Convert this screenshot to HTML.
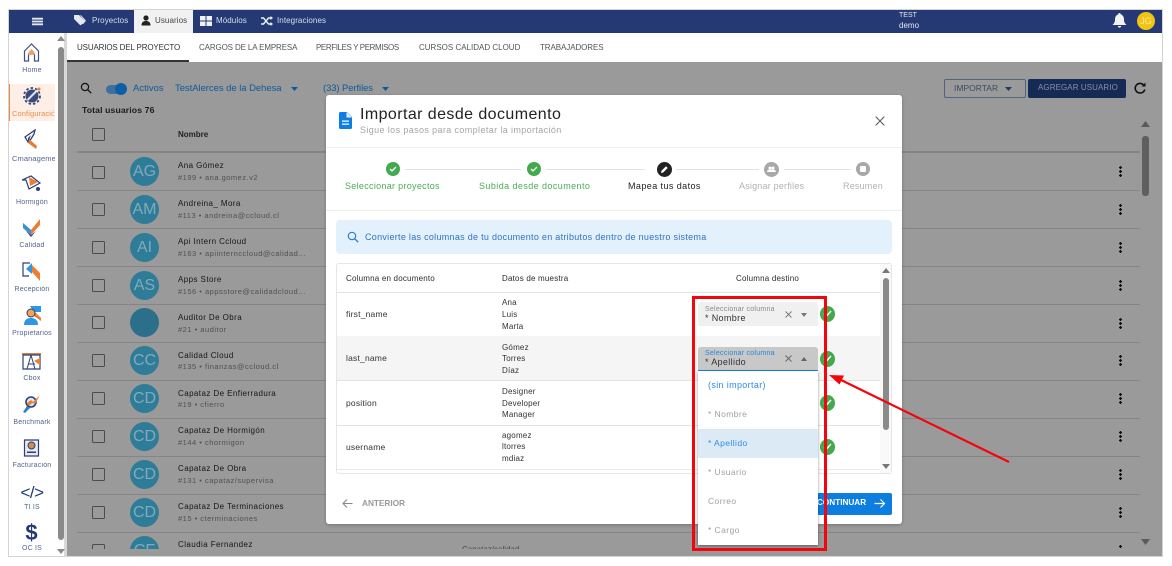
<!DOCTYPE html>
<html lang="es"><head><meta charset="utf-8"><title>Importar desde documento</title>
<style>
html,body{margin:0;padding:0;background:#fff}
body{width:1172px;height:566px;overflow:hidden;position:relative;font-family:"Liberation Sans",sans-serif;color:#222;filter:blur(.3px)}
div,span,svg{position:absolute;box-sizing:border-box}
.t{white-space:nowrap;line-height:1}
.nav{color:#d8deeb;font-size:8px;letter-spacing:.08px;top:17px}
.tab{font-size:8px;top:44px;color:#333}
.side{font-size:7px;color:#54658f;width:58px;left:3px;text-align:center;letter-spacing:.2px;overflow:hidden;height:9px}
.cb{left:92px;width:13px;height:13px;border:1.5px solid #4c4c4c;border-radius:1.5px}
.av{left:130px;width:29px;height:29px;border-radius:50%;background:#2f7c98;color:#82aaba;font-size:16px;text-align:center;line-height:29px}
.n{left:178px;font-size:8px;color:#161616;letter-spacing:.42px}
.s{left:178px;font-size:7.5px;color:#505050;letter-spacing:.5px}
.l{left:77px;width:1063px;height:1px;background:#858585}
.d{left:1119px;width:3px;height:11px;background:radial-gradient(circle at 1.5px 1.5px,#111 1.3px,transparent 1.4px) 0 0/3px 4px repeat-y}
.st{font-size:9px;top:182px;letter-spacing:.3px}
.c{font-size:8px;color:#333;left:502px;letter-spacing:.2px}
.f{font-size:8.5px;color:#333;left:346px;letter-spacing:.2px}
.o{left:708px;font-size:8.5px;color:#a0a0a0;letter-spacing:.42px}
.hd{font-size:8px;color:#2b2b2b;letter-spacing:.2px;top:275px}
</style></head><body>
<!-- frame -->
<div style="left:8px;top:9px;width:1155px;height:548px;border:1px solid #d4d4d4;background:#fff"></div>
<div style="left:9px;top:10px;width:1153px;height:23px;background:#253a75"></div>
<div style="left:67px;top:62px;width:1095px;height:494px;background:#9a9a9a"></div>
<div style="left:64px;top:33px;width:3px;height:523px;background:#d9d9d9"></div>
<!-- top nav -->
<svg style="left:32px;top:17px" width="11" height="9" viewBox="0 0 11 9"><path d="M0 .8h11v1.800H0zM0 3.600h11v1.800H0zM0 6.400h11v1.800H0z" fill="#e4e7f0"/></svg>
<svg style="left:73px;top:14px" width="14" height="13" viewBox="0 0 14 13"><path d="M1 1h5l6 6-4.500 4.500L1 5z" fill="#e3e7f0"/><path d="M8 1.200l5 5.400-3 3.800-.7-.6 2.300-3.200L7 1.200z" fill="#e3e7f0"/></svg>
<div class="t nav" style="left:92px">Proyectos</div>
<div style="left:134px;top:10px;width:59px;height:23px;background:#f1f1f1"></div>
<svg style="left:141px;top:15px" width="10" height="11" viewBox="0 0 10 11"><circle cx="5" cy="3" r="2.600" fill="#222"/><path d="M.5 10.500C.5 7 2.500 6 5 6s4.500 1 4.500 4.500z" fill="#222"/></svg>
<div class="t nav" style="left:155px;color:#444">Usuarios</div>
<svg style="left:200px;top:15px" width="12" height="12" viewBox="0 0 12 12"><path d="M0 1h5.500v4.500H0zM6.500 1H12v4.500H6.500zM0 6.500h5.500V11H0zM6.500 6.500H12V11H6.500z" fill="#f0f2f7"/></svg>
<div class="t nav" style="left:216px">Módulos</div>
<svg style="left:261px;top:16px" width="12" height="10" viewBox="0 0 12 10"><path d="M0 2h2.500l5 6H10M0 8h2.500l5-6H10" fill="none" stroke="#eef0f6" stroke-width="1.400"/><path d="M9.500 0l2.500 2-2.500 2zM9.500 6L12 8l-2.500 2z" fill="#eef0f6"/></svg>
<div class="t nav" style="left:277px">Integraciones</div>
<div class="t" style="left:899px;top:12px;font-size:7px;color:#e5e8f0">TEST</div>
<div class="t" style="left:899px;top:22px;font-size:8px;color:#e5e8f0">demo</div>
<svg style="left:1112px;top:12px" width="15" height="16" viewBox="0 0 15 16"><path d="M7.500 1c.8 0 1.200.5 1.200 1.200C11 3 12 5 12 7.500c0 2.500.8 3.800 2.500 5.500H.5C2.200 11.300 3 10 3 7.500 3 5 4 3 6.300 2.200 6.300 1.500 6.700 1 7.500 1zM5.800 14h3.400c0 1-.8 1.600-1.700 1.600S5.800 15 5.800 14z" fill="#f3f3f3"/></svg>
<div style="left:1137px;top:12px;width:18px;height:18px;border-radius:50%;background:#f3c312;color:#f6e9a8;font-size:9px;line-height:18px;text-align:center">JG</div>
<!-- tabs -->
<div class="t tab" style="left:77px;letter-spacing:-.15px">USUARIOS DEL PROYECTO</div>
<div style="left:67px;top:60px;width:122px;height:2px;background:#333"></div>
<div class="t tab" style="left:199px;color:#555;letter-spacing:-.13px">CARGOS DE LA EMPRESA</div>
<div class="t tab" style="left:316px;color:#555;letter-spacing:-.4px">PERFILES Y PERMISOS</div>
<div class="t tab" style="left:419px;color:#555">CURSOS CALIDAD CLOUD</div>
<div class="t tab" style="left:540px;color:#555;letter-spacing:-.08px">TRABAJADORES</div>
<!-- sidebar -->
<svg style="left:57px;top:36px" width="8" height="6" viewBox="0 0 8 6"><path d="M4 0l4 5H0z" fill="#8a8a8a"/></svg>
<div style="left:58px;top:47px;width:6px;background:#8a8a8a;border-radius:3px;height:493px"></div>
<svg style="left:57px;top:549px" width="8" height="6" viewBox="0 0 8 6"><path d="M0 0h8L4 5z" fill="#8a8a8a"/></svg>
<svg style="left:23px;top:43px" width="17" height="19" viewBox="0 0 17 19"><path d="M8.500 1L1.500 8v10h4v-6a3 3 0 016 0v6h4V8z" fill="none" stroke="#3d4f83" stroke-width="1.200"/><path d="M8.500 6l-3 3v3h6V9z" fill="#f0a268"/></svg>
<div class="t side" style="top:67px">Home</div>
<div style="left:9px;top:84px;width:46px;height:37px;background:#fdefe6;border-left:1px solid #ef8a46"></div>
<svg style="left:22px;top:86px" width="20" height="19" viewBox="0 0 20 19"><circle cx="10" cy="10" r="6.500" fill="#39497b"/><circle cx="10" cy="10" r="8" fill="none" stroke="#39497b" stroke-width="1.800" stroke-dasharray="2.500 2"/><path d="M5.500 14L15 4.500" stroke="#dfe4ef" stroke-width="2"/><circle cx="17" cy="3" r="1.500" fill="#ef8032"/></svg>
<div class="t side" style="top:110px;left:12px;width:42px;color:#ef8a46;font-size:7.500px;letter-spacing:.1px">Configuración</div>
<svg style="left:24px;top:129px" width="15" height="21" viewBox="0 0 15 21"><path d="M11 1L1 8l3 5 3-3 3-5z" fill="#fff" stroke="#2c3f78" stroke-width="1.300"/><path d="M4 9l9 8-1 3-8-6z" fill="#e97b34"/><path d="M4 9l3-3-3 8z" fill="#2c3f78"/></svg>
<div class="t side" style="top:155px;left:12px;width:43px;letter-spacing:.1px;font-size:7.500px;text-align:left">Cmanagement</div>
<svg style="left:21px;top:175px" width="22" height="19" viewBox="0 0 22 19"><path d="M1 5h4l3 9 11-6L10 1z" fill="none" stroke="#2c3f78" stroke-width="1.200"/><path d="M8 2l9 5-8 4z" fill="#ea7d36"/><circle cx="17" cy="14" r="2" fill="#2c3f78"/></svg>
<div class="t side" style="top:199px">Hormigón</div>
<svg style="left:23px;top:218px" width="17" height="20" viewBox="0 0 17 20"><path d="M0 5l8 7 9-11v6l-9 10-8-7z" fill="#ec7e32"/><path d="M0 5l8 7v5l-8-7z" fill="#3b8ed8"/><path d="M3 13l5 4 5-4-5 6z" fill="#2c3f78"/></svg>
<div class="t side" style="top:242px">Calidad</div>
<svg style="left:22px;top:262px" width="19" height="20" viewBox="0 0 19 20"><path d="M8 1H1v13h6" fill="none" stroke="#2c3f78" stroke-width="1.200"/><path d="M4 7l6-6v11z" fill="#2f95e6"/><path d="M10 3l8 8v8l-8-9z" fill="#ec7e32"/></svg>
<div class="t side" style="top:286px">Recepción</div>
<svg style="left:23px;top:306px" width="19" height="20" viewBox="0 0 19 20"><path d="M7 0h11v6H11z" fill="#2f95e6"/><path d="M9 3l9 9v3L7 7z" fill="#ec7e32"/><circle cx="8" cy="7" r="4" fill="#f1a64f" stroke="#2c3f78"/><path d="M1 19c0-5 3-7 7-7s7 2 7 7z" fill="#2f95e6"/></svg>
<div class="t side" style="top:330px">Propietarios</div>
<svg style="left:21px;top:352px" width="21" height="18" viewBox="0 0 21 18"><path d="M1 1h19v2H1z" fill="#c8864f"/><path d="M2 3h17v14H2z" fill="#fff" stroke="#2c3f78" stroke-width="1.200"/><path d="M10 3L6 17M10 3l4 14M7 12h7" stroke="#2c3f78" fill="none"/><path d="M13 9l6-3v7z" fill="#ec7e32"/></svg>
<div class="t side" style="top:375px">Cbox</div>
<svg style="left:22px;top:394px" width="19" height="20" viewBox="0 0 19 20"><circle cx="9" cy="8" r="5" fill="#dbe5f2" stroke="#2c3f78" stroke-width="1.600"/><path d="M5 12l-4 6 2 1 5-5z" fill="#2f7ec8"/><path d="M5 9l4-3 2 2 7-7-5 9-3-1-3 3z" fill="#ec7e32"/></svg>
<div class="t side" style="top:419px">Benchmark</div>
<svg style="left:23px;top:439px" width="17" height="18" viewBox="0 0 17 18"><path d="M1.500 1h14v16h-14z" fill="#e8ebf3" stroke="#2c3f78" stroke-width="1.200"/><circle cx="8.500" cy="6.500" r="3.500" fill="#d18f4d" stroke="#2c3f78"/><path d="M4 12.500h9v1.500H4z" fill="#2c3f78"/></svg>
<div class="t side" style="top:462px">Facturación</div>
<div class="t" style="left:20px;top:484px;font-size:17px;color:#1f3a7a;letter-spacing:-.5px;width:24px;text-align:center">&lt;/&gt;</div>
<div class="t side" style="top:504px">TI IS</div>
<div class="t" style="left:20px;top:522px;font-size:22px;font-weight:bold;color:#223a78;width:23px;text-align:center">$</div>
<div class="t side" style="top:545px">OC IS</div>
<!-- toolbar -->
<svg style="left:80px;top:82px" width="12" height="12" viewBox="0 0 12 12"><circle cx="5" cy="5" r="3.600" fill="none" stroke="#111" stroke-width="1.200"/><path d="M7.800 7.800l3.400 3.400" stroke="#111" stroke-width="1.300"/></svg>
<div style="left:106px;top:85px;width:20px;height:9px;border-radius:5px;background:#3f6e9f"></div>
<div style="left:115px;top:83px;width:12px;height:12px;border-radius:50%;background:#0d5fa5"></div>
<div class="t" style="left:133px;top:84px;font-size:9.500px;color:#0f5a9a;letter-spacing:0">Activos</div>
<div class="t" style="left:175px;top:84px;font-size:9.500px;color:#0f5a9a;letter-spacing:-.05px">TestAlerces de la Dehesa</div>
<svg style="left:291px;top:87px" width="7" height="4" viewBox="0 0 7 4"><path d="M0 0h7L3.500 4z" fill="#0f5a9a"/></svg>
<div class="t" style="left:323px;top:84px;font-size:9.500px;color:#0f5a9a;letter-spacing:-.1px">(33) Perfiles</div>
<svg style="left:382px;top:87px" width="7" height="4" viewBox="0 0 7 4"><path d="M0 0h7L3.500 4z" fill="#0f5a9a"/></svg>
<div class="t" style="left:82px;top:106px;font-size:8.700px;font-weight:bold;color:#1b1b1b;letter-spacing:.1px">Total usuarios 76</div>
<div style="left:944px;top:79px;width:82px;height:19px;border:1px solid #52627f;border-radius:2px"></div>
<div class="t" style="left:954px;top:84px;font-size:8.500px;color:#3d4a63;letter-spacing:0">IMPORTAR</div>
<svg style="left:1005px;top:87px" width="7" height="4" viewBox="0 0 7 4"><path d="M0 0h7L3.500 4z" fill="#273a66"/></svg>
<div style="left:1028px;top:79px;width:98px;height:19px;background:#152a55;border-radius:2px"></div>
<div class="t" style="left:1038px;top:84px;font-size:8px;color:#8791a8;letter-spacing:.08px">AGREGAR USUARIO</div>
<svg style="left:1134px;top:82px" width="12" height="12" viewBox="0 0 12 12"><path d="M10 3.500A4.800 4.800 0 106.300 11a4.800 4.800 0 004.500-3.500" fill="none" stroke="#111" stroke-width="1.600"/><path d="M7.500 4.500H11.500V.5z" fill="#111"/></svg>
<!-- table -->
<div class="cb" style="top:128px"></div>
<div class="t" style="left:178px;top:131px;font-size:8px;font-weight:bold;color:#222">Nombre</div>
<div class="l" style="top:151px;height:2px"></div>
<div class="l" style="top:190px"></div><div class="l" style="top:228px"></div><div class="l" style="top:266px"></div><div class="l" style="top:304px"></div><div class="l" style="top:342px"></div><div class="l" style="top:380px"></div><div class="l" style="top:418px"></div><div class="l" style="top:456px"></div><div class="l" style="top:494px"></div><div class="l" style="top:532px"></div>

<div class="cb" style="top:166px"></div><div class="av" style="top:157px">AG</div><div class="t n" style="top:162px">Ana Gómez</div><div class="t s" style="top:174px">#199 • ana.gomez.v2</div><div class="d" style="left:1119px;top:166px"></div>
<div class="cb" style="top:203px"></div><div class="av" style="top:195px">AM</div><div class="t n" style="top:200px">Andreina_ Mora</div><div class="t s" style="top:212px">#113 • andreina@ccloud.cl</div><div class="d" style="top:204px"></div>
<div class="cb" style="top:241px"></div><div class="av" style="top:233px">AI</div><div class="t n" style="top:238px">Api Intern Ccloud</div><div class="t s" style="top:250px">#163 • apiinternccloud@calidad...</div><div class="d" style="top:242px"></div>
<div class="cb" style="top:279px"></div><div class="av" style="top:271px">AS</div><div class="t n" style="top:276px">Apps Store</div><div class="t s" style="top:288px">#156 • appsstore@calidadcloud...</div><div class="d" style="top:280px"></div>
<div class="cb" style="top:316px"></div><div class="av" style="top:308px;background:#2c6f8b"></div><div class="t n" style="top:314px">Auditor De Obra</div><div class="t s" style="top:326px">#21 • auditor</div><div class="d" style="top:318px"></div>
<div class="cb" style="top:354px"></div><div class="av" style="top:346px">CC</div><div class="t n" style="top:352px">Calidad Cloud</div><div class="t s" style="top:363px">#135 • finanzas@ccloud.cl</div><div class="d" style="top:355px"></div>
<div class="cb" style="top:392px"></div><div class="av" style="top:384px">CD</div><div class="t n" style="top:390px">Capataz De Enfierradura</div><div class="t s" style="top:401px">#19 • cfierro</div><div class="d" style="top:393px"></div>
<div class="cb" style="top:430px"></div><div class="av" style="top:422px">CD</div><div class="t n" style="top:427px">Capataz De Hormigón</div><div class="t s" style="top:439px">#144 • chormigon</div><div class="d" style="top:431px"></div>
<div class="cb" style="top:468px"></div><div class="av" style="top:460px">CD</div><div class="t n" style="top:465px">Capataz De Obra</div><div class="t s" style="top:477px">#131 • capataz/supervisa</div><div class="d" style="top:469px"></div>
<div class="cb" style="top:506px"></div><div class="av" style="top:498px">CD</div><div class="t n" style="top:503px">Capataz De Terminaciones</div><div class="t s" style="top:515px">#15 • cterminaciones</div><div class="d" style="top:507px"></div>
<div style="left:77px;top:535px;width:1050px;height:14px;overflow:hidden">
<div class="cb" style="left:15px;top:9px"></div><div class="av" style="left:53px;top:1px">CF</div><div class="t n" style="left:101px;top:6px">Claudia Fernandez</div><div class="t" style="left:251px;top:11px;font-size:8px;color:#333">- -</div><div class="t" style="left:385px;top:11px;font-size:8px;color:#444">Capataz/calidad</div><div class="d" style="left:1042px;top:10px"></div></div>
<!-- outer scrollbar -->
<svg style="left:1141px;top:121px" width="9" height="6" viewBox="0 0 9 6"><path d="M4.500 0L9 6H0z" fill="#5a5a5a"/></svg>
<div style="left:1142px;top:136px;width:7px;background:#5f5f5f;border-radius:3px;height:60px"></div>
<svg style="left:1141px;top:539px" width="9" height="6" viewBox="0 0 9 6"><path d="M0 0h9L4.500 6z" fill="#5a5a5a"/></svg>
<!-- modal -->
<div style="left:326px;top:95px;width:576px;height:429px;background:#fff;border-radius:3px;box-shadow:0 1px 3px rgba(0,0,0,.25)"></div>
<svg style="left:339px;top:112px" width="13" height="17" viewBox="0 0 13 17"><path d="M1.500 0H8l5 5v10.500a1.500 1.500 0 01-1.500 1.500h-10A1.500 1.500 0 010 15.500v-14A1.500 1.500 0 011.500 0z" fill="#0d7ee6"/><path d="M7.500 0v5.500H13" fill="#fff" opacity=".9"/><path d="M3 8.500h7v1.300H3zM3 11.500h7v1.300H3z" fill="#fff"/></svg>
<div class="t" style="left:360px;top:107px;font-size:16px;color:#222;letter-spacing:.42px">Importar desde documento</div>
<div class="t" style="left:360px;top:126px;font-size:9px;color:#a5a5a5;letter-spacing:.38px">Sigue los pasos para completar la importación</div>
<svg style="left:875px;top:116px" width="10" height="10" viewBox="0 0 10 10"><path d="M.7.700l8.600 8.600M9.300.700L.7 9.300" stroke="#666" stroke-width="1.100"/></svg>
<div style="left:326px;top:147px;width:576px;height:1px;background:#f0f0f0"></div>
<div style="left:326px;top:210px;width:576px;height:1px;background:#eee"></div>
<!-- stepper -->
<div style="left:405px;top:169px;width:116px;height:1px;background:#e2e2e2"></div>
<div style="left:546px;top:169px;width:99px;height:1px;background:#e2e2e2"></div>
<div style="left:676px;top:169px;width:83px;height:1px;background:#e2e2e2"></div>
<div style="left:784px;top:169px;width:67px;height:1px;background:#e2e2e2"></div>
<div style="left:386px;top:162px;width:14px;height:14px;border-radius:50%;background:#42a94d"></div>
<svg style="left:389px;top:166px" width="8" height="6" viewBox="0 0 8 6"><path d="M1 3l2 2 4-4" fill="none" stroke="#fff" stroke-width="1.300"/></svg>
<div style="left:527px;top:162px;width:14px;height:14px;border-radius:50%;background:#42a94d"></div>
<svg style="left:530px;top:166px" width="8" height="6" viewBox="0 0 8 6"><path d="M1 3l2 2 4-4" fill="none" stroke="#fff" stroke-width="1.300"/></svg>
<div style="left:657px;top:162px;width:15px;height:15px;border-radius:50%;background:#222"></div>
<svg style="left:660px;top:165px" width="9" height="9" viewBox="0 0 9 9"><path d="M1 8l.5-2.200L6 1.300 7.700 3 3.200 7.500z" fill="#fff"/></svg>
<div style="left:764px;top:162px;width:15px;height:15px;border-radius:50%;background:#a8a8a8"></div>
<svg style="left:767px;top:166px" width="9" height="7" viewBox="0 0 9 7"><circle cx="3" cy="2" r="1.500" fill="#fff"/><circle cx="6" cy="2" r="1.500" fill="#fff"/><path d="M0 6c0-2 1.500-2.500 3-2.500S6 4 6 6zM4 6c0-2 1-2.500 2-2.500S9 4 9 6z" fill="#fff"/></svg>
<div style="left:856px;top:162px;width:14px;height:14px;border-radius:50%;background:#a8a8a8"></div>
<div style="left:860px;top:166px;width:6px;height:6px;background:#fff;border-radius:1px"></div>
<div class="t st" style="left:345px;color:#49ad55">Seleccionar proyectos</div>
<div class="t st" style="left:479px;color:#49ad55;letter-spacing:.42px">Subida desde documento</div>
<div class="t st" style="left:628px;color:#222;letter-spacing:.42px">Mapea tus datos</div>
<div class="t st" style="left:739px;color:#b2b2b2;letter-spacing:.2px">Asignar perfiles</div>
<div class="t st" style="left:843px;color:#b2b2b2;letter-spacing:.2px">Resumen</div>
<!-- alert -->
<div style="left:336px;top:220px;width:556px;height:34px;background:#e3f1fc;border-radius:4px"></div>
<svg style="left:347px;top:231px" width="12" height="12" viewBox="0 0 12 12"><circle cx="5" cy="5" r="3.700" fill="none" stroke="#2b78d0" stroke-width="1.200"/><path d="M7.800 7.800l3.400 3.400" stroke="#2b78d0" stroke-width="1.300"/></svg>
<div class="t" style="left:365px;top:233px;font-size:9px;color:#2e72c5;letter-spacing:.29px">Convierte las columnas de tu documento en atributos dentro de nuestro sistema</div>
<!-- inner table -->
<div style="left:336px;top:263px;width:556px;height:211px;border:1px solid #e6e6e6;border-radius:3px"></div>
<div style="left:337px;top:292px;width:543px;height:1px;background:#e2e2e2"></div>
<div style="left:337px;top:336px;width:543px;height:45px;background:#f5f5f5;border-bottom:1px solid #e2e2e2"></div>
<div style="left:337px;top:425px;width:543px;height:1px;background:#e2e2e2"></div>
<div style="left:337px;top:469px;width:543px;height:1px;background:#e8e8e8"></div>
<div class="t hd" style="left:346px">Columna en documento</div>
<div class="t hd" style="left:502px">Datos de muestra</div>
<div class="t hd" style="left:736px">Columna destino</div>
<div class="t f" style="top:310px">first_name</div><div class="t f" style="top:354px">last_name</div><div class="t f" style="top:399px">position</div><div class="t f" style="top:443px">username</div>
<div class="t c" style="top:299px">Ana</div><div class="t c" style="top:311px">Luis</div><div class="t c" style="top:323px">Marta</div>
<div class="t c" style="top:344px">Gómez</div><div class="t c" style="top:355px">Torres</div><div class="t c" style="top:367px">Díaz</div>
<div class="t c" style="top:388px">Designer</div><div class="t c" style="top:400px">Developer</div><div class="t c" style="top:411px">Manager</div>
<div class="t c" style="top:432px">agomez</div><div class="t c" style="top:443px">ltorres</div><div class="t c" style="top:455px">mdiaz</div>
<!-- inner scrollbar -->
<div style="left:880px;top:264px;width:11px;height:209px;background:#f9f9f9"></div>
<svg style="left:882px;top:268px" width="8" height="5" viewBox="0 0 8 5"><path d="M4 0l4 5H0z" fill="#777"/></svg>
<div style="left:883px;top:278px;width:6px;height:152px;background:#8a8a8a;border-radius:3px"></div>
<svg style="left:882px;top:464px" width="8" height="5" viewBox="0 0 8 5"><path d="M0 0h8L4 5z" fill="#777"/></svg>
<!-- selects -->
<div style="left:698px;top:302px;width:120px;height:24px;background:#f0f0f0;border-radius:3px 3px 0 0"></div>
<div class="t" style="left:705px;top:306px;font-size:7px;color:#8a8a8a;letter-spacing:.25px">Seleccionar columna</div>
<div class="t" style="left:705px;top:314px;font-size:9px;color:#333;letter-spacing:.35px">* Nombre</div>
<svg style="left:785px;top:311px" width="7" height="7" viewBox="0 0 7 7"><path d="M.5.500l6 6M6.500.500l-6 6" stroke="#777" stroke-width=".9"/></svg>
<svg style="left:801px;top:313px" width="6" height="4" viewBox="0 0 6 4"><path d="M0 0h6L3 4z" fill="#777"/></svg>
<div style="left:698px;top:347px;width:120px;height:24px;background:#c8c8c8;border-radius:3px 3px 0 0;border-bottom:1px solid #1c86e0"></div>
<div class="t" style="left:705px;top:350px;font-size:7px;color:#2585d8;letter-spacing:.25px">Seleccionar columna</div>
<div class="t" style="left:705px;top:358px;font-size:9px;color:#333;letter-spacing:.35px">* Apellido</div>
<svg style="left:785px;top:355px" width="7" height="7" viewBox="0 0 7 7"><path d="M.5.500l6 6M6.500.500l-6 6" stroke="#666" stroke-width=".9"/></svg>
<svg style="left:801px;top:357px" width="6" height="4" viewBox="0 0 6 4"><path d="M3 0l3 4H0z" fill="#666"/></svg>
<!-- check icons -->
<div style="left:820px;top:306px;width:15px;height:16px;border-radius:50%;background:#42a94d"></div>
<svg style="left:823px;top:310px" width="9" height="7" viewBox="0 0 9 7"><path d="M1 3.500L3.500 6 8 1" fill="none" stroke="#fff" stroke-width="1.500"/></svg>
<div style="left:820px;top:351px;width:15px;height:16px;border-radius:50%;background:#42a94d"></div>
<svg style="left:823px;top:355px" width="9" height="7" viewBox="0 0 9 7"><path d="M1 3.500L3.500 6 8 1" fill="none" stroke="#fff" stroke-width="1.500"/></svg>
<div style="left:820px;top:395px;width:15px;height:16px;border-radius:50%;background:#42a94d"></div>
<svg style="left:823px;top:399px" width="9" height="7" viewBox="0 0 9 7"><path d="M1 3.500L3.500 6 8 1" fill="none" stroke="#fff" stroke-width="1.500"/></svg>
<div style="left:820px;top:439px;width:15px;height:16px;border-radius:50%;background:#42a94d"></div>
<svg style="left:823px;top:443px" width="9" height="7" viewBox="0 0 9 7"><path d="M1 3.500L3.500 6 8 1" fill="none" stroke="#fff" stroke-width="1.500"/></svg>
<!-- footer -->
<svg style="left:342px;top:498px" width="11" height="11" viewBox="0 0 11 11"><path d="M10.500 5.500H1M5 1.500l-4 4 4 4" fill="none" stroke="#8a8a8a" stroke-width="1.100"/></svg>
<div class="t" style="left:362px;top:499px;font-size:8.300px;color:#999;font-weight:bold;letter-spacing:-.05px">ANTERIOR</div>
<div style="left:800px;top:493px;width:92px;height:22px;background:#0b7ee0;border-radius:2px"></div>
<div class="t" style="left:817px;top:499px;font-size:8.200px;color:#fff;font-weight:bold;letter-spacing:0">CONTINUAR</div>
<svg style="left:874px;top:498px" width="12" height="11" viewBox="0 0 12 11"><path d="M.5 5.500h10M6.500 1.500l4 4-4 4" fill="none" stroke="#fff" stroke-width="1.200"/></svg>
<!-- dropdown -->
<div style="left:698px;top:371px;width:120px;height:174px;background:#fff;box-shadow:0 1px 3px rgba(0,0,0,.4)"></div>
<div style="left:698px;top:429px;width:120px;height:29px;background:#dceaf6"></div>
<div class="t o" style="top:381px;color:#2d8ce6;font-size:9px;letter-spacing:.35px">(sin importar)</div>
<div class="t o" style="top:410px">* Nombre</div>
<div class="t o" style="top:439px;color:#2d8ce6">* Apellido</div>
<div class="t o" style="top:468px">* Usuario</div>
<div class="t o" style="top:497px">Correo</div>
<div class="t o" style="top:526px">* Cargo</div>
<!-- annotation -->
<div style="left:692px;top:296px;width:135px;height:255px;border:3px solid #f2050d"></div>
<svg style="left:825px;top:370px" width="190" height="96" viewBox="0 0 190 96"><path d="M184 92L14 9" stroke="#f2050d" stroke-width="2.200" fill="none"/><path d="M4 5l15 .5-4.500 9z" fill="#f2050d"/></svg>
</body></html>
